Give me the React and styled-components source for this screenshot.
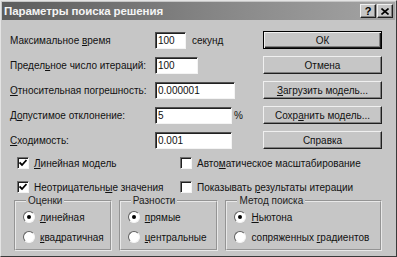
import styled, { createGlobalStyle } from 'styled-components';

const GlobalStyle = createGlobalStyle`
  html, body {
    margin: 0;
    padding: 0;
    background: #c6c6c6;
  }
  * {
    box-sizing: border-box;
  }
`;

const fields = [
  { label: ['Максимальное ', 'в', 'ремя'], value: '100', width: 31, unit: 'секунд', gap: 6 },
  { label: ['Предел', 'ь', 'ное число итераций:'], value: '100', width: 43 },
  { label: ['', 'О', 'тносительная погрешность:'], value: '0.000001', width: 80 },
  { label: ['Д', 'о', 'пустимое отклонение:'], value: '5', width: 77, unit: '%', gap: 2 },
  { label: ['', 'С', 'ходимость:'], value: '0.001', width: 77 },
];

const buttons = [
  { text: ['', '', 'ОК'], isDefault: true },
  { text: ['', '', 'Отмена'] },
  { text: ['', 'З', 'агрузить модель...'] },
  { text: ['Сохр', 'а', 'нить модель...'] },
  { text: ['', '', 'Справка'] },
];

const groups = [
  { title: 'Оценки', width: 98, options: [['', 'л', 'инейная'], ['', 'к', 'вадратичная']] },
  { title: 'Разности', width: 100, options: [['', 'п', 'рямые'], ['', 'ц', 'ентральные']] },
  { title: 'Метод поиска', width: 157, options: [['', 'Н', 'ьютона'], ['сопряженных ', 'г', 'радиентов']] },
];

const Label = ({ parts }) => (
  <Text>
    {parts[0]}
    {parts[1] && <Key>{parts[1]}</Key>}
    {parts[2]}
  </Text>
);

const CheckMark = () => (
  <svg width='8' height='8' viewBox='0 0 8 8'>
    <path d='M0.5 3.5 L3 6 L7.5 1' fill='none' stroke='#000' strokeWidth='1.8' />
  </svg>
);

const App = () => {
  return (
    <>
      <GlobalStyle />
      <Window>
        <TitleBar>
          <Title>Параметры поиска решения</Title>
          <TitleButtons>
            <TitleButton>?</TitleButton>
            <TitleButton>
              <svg width='8' height='7' viewBox='0 0 8 7'>
                <path d='M0.5 0.5 L7.5 6.5 M7.5 0.5 L0.5 6.5' stroke='#000' strokeWidth='1.6' />
              </svg>
            </TitleButton>
          </TitleButtons>
        </TitleBar>

        <Body>
          <Top>
            <Form>
              {fields.map((f, i) => (
                <FieldRow key={i}>
                  <FieldLabel>
                    <Label parts={f.label} />
                  </FieldLabel>
                  <Input defaultValue={f.value} $width={f.width} readOnly />
                  {f.unit && <Unit $gap={f.gap}>{f.unit}</Unit>}
                </FieldRow>
              ))}
            </Form>
            <Buttons>
              {buttons.map((b, i) => (
                <Button key={i} $isDefault={b.isDefault}>
                  <Label parts={b.text} />
                </Button>
              ))}
            </Buttons>
          </Top>

          <Checks>
            <Check>
              <Box><CheckMark /></Box>
              <Label parts={['', 'Л', 'инейная модель']} />
            </Check>
            <Check>
              <Box />
              <Label parts={['Авто', 'м', 'атическое масштабирование']} />
            </Check>
            <Check>
              <Box><CheckMark /></Box>
              <Label parts={['Неотрицательн', 'ы', 'е значения']} />
            </Check>
            <Check>
              <Box />
              <Label parts={['Показывать ', 'р', 'езультаты итерации']} />
            </Check>
          </Checks>

          <Groups>
            {groups.map((g) => (
              <Group key={g.title} $width={g.width}>
                <Legend>{g.title}</Legend>
                {g.options.map((o, i) => (
                  <Radio key={i}>
                    <RadioDot $checked={i === 0} />
                    <Label parts={o} />
                  </Radio>
                ))}
              </Group>
            ))}
          </Groups>
        </Body>
      </Window>
    </>
  );
};

const Window = styled.div`
  width: 397px;
  height: 257px;
  display: flex;
  flex-direction: column;
  background: #c6c6c6;
  border: 1px solid;
  border-color: #e4e4e4 #3a3a3a #3a3a3a #e4e4e4;
  padding: 1px;
  font-family: 'Liberation Sans', Arial, sans-serif;
  font-size: 10px;
  color: #111;
`;
const TitleBar = styled.div`
  height: 18px;
  display: flex;
  align-items: center;
  justify-content: space-between;
  padding: 0 2px 0 2px;
  background: linear-gradient(90deg, #5c5c5c 0%, #8a8a8a 60%, #a4a4a4 100%);
`;
const Title = styled.div`
  color: #f4f4f4;
  font-weight: bold;
  font-size: 11.5px;
  letter-spacing: -0.1px;
`;
const TitleButtons = styled.div`
  display: flex;
  gap: 1px;
`;
const TitleButton = styled.div`
  width: 16px;
  height: 14px;
  display: flex;
  align-items: center;
  justify-content: center;
  background: #c6c6c6;
  border: 1px solid;
  border-color: #f0f0f0 #202020 #202020 #f0f0f0;
  box-shadow: inset -1px -1px #808080;
  font-weight: bold;
  font-size: 11px;
  color: #000;
`;
const Body = styled.div`
  padding: 11px 13px 0 8px;
`;
const Top = styled.div`
  display: grid;
  grid-template-columns: 1fr 119px;
`;
const Form = styled.div`
  display: flex;
  flex-direction: column;
  gap: 7px;
`;
const FieldRow = styled.div`
  display: grid;
  grid-template-columns: 145px auto auto;
  justify-content: start;
  align-items: center;
  height: 18px;
`;
const FieldLabel = styled.div`
  white-space: nowrap;
`;
const Text = styled.span`
  white-space: nowrap;
`;
const Input = styled.input`
  width: ${(p) => p.$width}px;
  height: 17px;
  padding: 0 0 0 2px;
  font-family: inherit;
  font-size: 10px;
  color: #111;
  background: #fff;
  border: 1px solid;
  border-color: #505050 #f4f4f4 #f4f4f4 #505050;
  box-shadow: inset 1px 1px #202020;
  outline: none;
`;
const Unit = styled.span`
  margin-left: ${(p) => p.$gap}px;
`;
const Buttons = styled.div`
  display: flex;
  flex-direction: column;
  gap: 7px;
`;
const Button = styled.div`
  height: 18px;
  display: flex;
  align-items: center;
  justify-content: center;
  background: #c6c6c6;
  border: 1px solid;
  border-color: ${(p) =>
    p.$isDefault ? '#000' : '#f0f0f0 #202020 #202020 #f0f0f0'};
  box-shadow: ${(p) =>
    p.$isDefault
      ? 'inset 1px 1px #f0f0f0, inset -1px -1px #202020, inset -2px -2px #808080'
      : 'inset -1px -1px #808080'};
`;
const Key = styled.span`
  text-decoration: underline;
`;
const Checks = styled.div`
  display: grid;
  grid-template-columns: 163px 1fr;
  row-gap: 8px;
  margin: 6px 0 0 7px;
`;
const Check = styled.div`
  display: flex;
  align-items: center;
  gap: 5px;
  height: 16px;
`;
const Box = styled.div`
  width: 12px;
  height: 12px;
  display: flex;
  align-items: center;
  justify-content: center;
  background: #fff;
  border: 1px solid;
  border-color: #707070 #f4f4f4 #f4f4f4 #707070;
  box-shadow: inset 1px 1px #202020;
`;
const Groups = styled.div`
  display: flex;
  gap: 7px;
  margin: 0 0 0 4px;
`;
const Group = styled.fieldset`
  width: ${(p) => p.$width}px;
  height: 56px;
  margin: 0;
  padding: 5px 0 0 7px;
  min-width: 0;
  border: 2px groove #e8e8e8;
  display: flex;
  flex-direction: column;
  gap: 8px;
`;
const Legend = styled.legend`
  padding: 0 2px;
  margin-left: 3px;
  font-size: 10px;
  color: #222;
`;
const Radio = styled.div`
  display: flex;
  align-items: center;
  gap: 5px;
  height: 12px;
`;
const RadioDot = styled.div`
  position: relative;
  width: 12px;
  height: 12px;
  border-radius: 50%;
  background: #fff;
  border: 1px solid;
  border-color: #606060 #f4f4f4 #f4f4f4 #606060;
  &::after {
    content: '';
    display: ${(p) => (p.$checked ? 'block' : 'none')};
    position: absolute;
    left: 3px;
    top: 3px;
    width: 4px;
    height: 4px;
    border-radius: 50%;
    background: #000;
  }
`;

export default App;
